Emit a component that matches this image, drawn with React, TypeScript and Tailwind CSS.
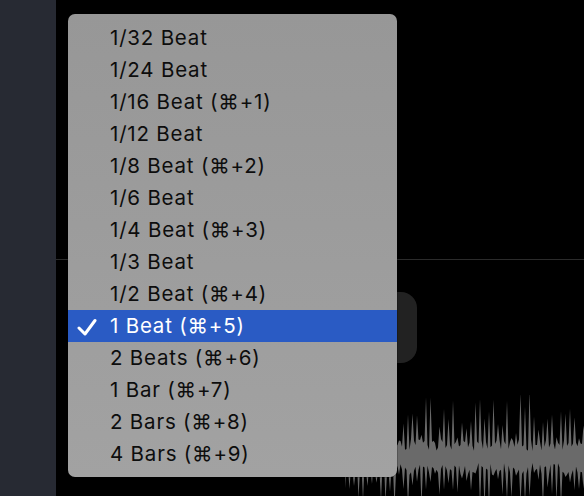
import { useMemo } from 'react';

const items = [
  { label: '1/32 Beat' },
  { label: '1/24 Beat' },
  { label: '1/16 Beat (⌘+1)' },
  { label: '1/12 Beat' },
  { label: '1/8 Beat (⌘+2)' },
  { label: '1/6 Beat' },
  { label: '1/4 Beat (⌘+3)' },
  { label: '1/3 Beat' },
  { label: '1/2 Beat (⌘+4)' },
  { label: '1 Beat (⌘+5)', checked: true },
  { label: '2 Beats (⌘+6)' },
  { label: '1 Bar (⌘+7)' },
  { label: '2 Bars (⌘+8)' },
  { label: '4 Bars (⌘+9)' },
];

function Waveform() {
  // seeded noise so the spikes stay put between renders
  const d = useMemo(() => {
    let seed = 11;
    const rand = () => {
      seed = (seed * 16807) % 2147483647;
      return seed / 2147483647;
    };
    const mid = 62;
    const top: string[] = [];
    const bottom: string[] = [];
    let i = 0;
    for (let x = 0; x <= 240; x += 1.5) {
      const peak = i % 3 === 0;
      const up = peak ? 14 + rand() * 52 : 6 + rand() * 12;
      const down = peak ? 16 + rand() * 34 : 6 + rand() * 12;
      top.push(`${x.toFixed(1)} ${(mid - up).toFixed(1)}`);
      bottom.push(`${x.toFixed(1)} ${(mid + down).toFixed(1)}`);
      i++;
    }
    return `M${top.join(' L')} L${bottom.reverse().join(' L')} Z`;
  }, []);

  return (
    <svg width="240" height="101" viewBox="0 0 240 101" className="block" aria-hidden="true">
      <path d={d} fill="#6a6a6a" />
    </svg>
  );
}

export default function App() {
  return (
    <div className="flex h-[496px] w-[584px] overflow-hidden bg-black font-['Inter','Noto_Sans',sans-serif]">
      <div className="w-[56px] shrink-0 bg-[#272a33]" />

      <div className="relative flex-1">
        <div className="flex h-full flex-col">
          <div className="h-[259px] shrink-0" />
          <div className="h-px w-full bg-[#2b2b2b]" />
          <div className="ml-[244px] mt-[32px] h-[71px] w-[117px] rounded-2xl bg-[#222222]" />
          <div className="ml-[289px] mt-[32px]">
            <Waveform />
          </div>
        </div>

        <div className="absolute left-[12px] top-[14px] w-[329px] rounded-[7px] bg-gradient-to-b from-[#979797] to-[#a2a2a2] pt-[8px] pb-[7px] shadow-[0_0_0_0.5px_rgba(0,0,0,0.4)]">
          {items.map((item) => (
            <div
              key={item.label}
              className={`relative flex h-[32px] items-center pl-[42px] text-[20.5px] leading-none tracking-[0.8px] ${
                item.checked ? 'bg-[#2a5bc4] text-white' : 'text-[#0d0d0d]'
              }`}
            >
              {item.checked && (
                <svg
                  width="20"
                  height="20"
                  viewBox="0 0 20 20"
                  className="absolute left-[9px] top-[7px]"
                  aria-hidden="true"
                >
                  <path
                    d="M2 11 L8 17 L18 3.5"
                    fill="none"
                    stroke="white"
                    strokeWidth="3"
                    strokeLinecap="round"
                    strokeLinejoin="round"
                  />
                </svg>
              )}
              <span>{item.label}</span>
            </div>
          ))}
        </div>
      </div>
    </div>
  );
}
